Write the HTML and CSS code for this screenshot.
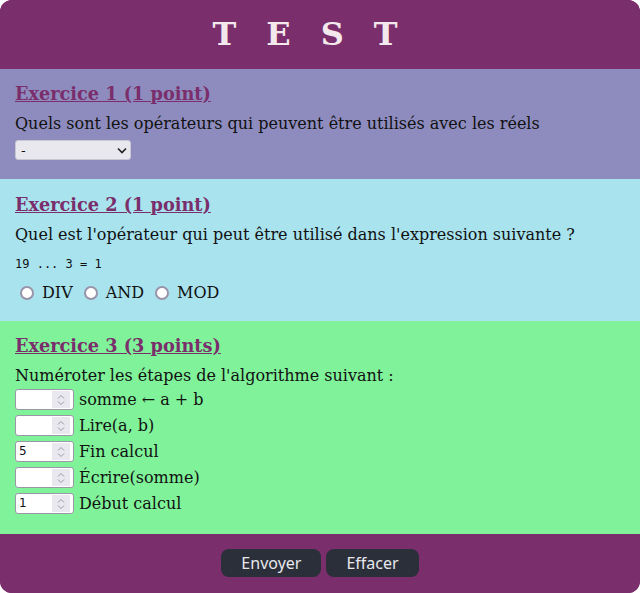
FILE: index.html
```html
<!DOCTYPE html>
<html lang="fr">
<head>
<meta charset="utf-8">
<title>Test</title>
<link rel="stylesheet" href="styles.css">
</head>
<body>
<form class="card">
  <header class="top">
    <h1 class="title">TEST</h1>
  </header>

  <section class="ex ex1">
    <h3 class="ex-title">Exercice 1 (1 point)</h3>
    <p class="q">Quels sont les opérateurs qui peuvent être utilisés avec les réels</p>
    <div class="select">
      <span class="select-val">-</span>
      <svg class="chev" width="10" height="7" viewBox="0 0 10 7"><path d="M1 1.5 L5 5.5 L9 1.5" fill="none" stroke="#222" stroke-width="1.6"/></svg>
    </div>
  </section>

  <section class="ex ex2">
    <h3 class="ex-title">Exercice 2 (1 point)</h3>
    <p class="q">Quel est l'opérateur qui peut être utilisé dans l'expression suivante ?</p>
    <code class="expr">19 ... 3 = 1</code>
    <div class="radios">
      <label class="opt"><span class="radio"></span>DIV</label>
      <label class="opt"><span class="radio"></span>AND</label>
      <label class="opt"><span class="radio"></span>MOD</label>
    </div>
  </section>

  <section class="ex ex3">
    <h3 class="ex-title">Exercice 3 (3 points)</h3>
    <p class="q q3">Numéroter les étapes de l'algorithme suivant :</p>
    <div class="steps">
      <div class="step"><span class="num"><span class="num-val"></span><span class="spin"><svg width="8" height="12" viewBox="0 0 8 12"><path d="M1 4.5 L4 1.5 L7 4.5 M1 7.5 L4 10.5 L7 7.5" fill="none" stroke="#9a9aa4" stroke-width="1"/></svg></span></span>somme ← a + b</div>
      <div class="step"><span class="num"><span class="num-val"></span><span class="spin"><svg width="8" height="12" viewBox="0 0 8 12"><path d="M1 4.5 L4 1.5 L7 4.5 M1 7.5 L4 10.5 L7 7.5" fill="none" stroke="#9a9aa4" stroke-width="1"/></svg></span></span>Lire(a, b)</div>
      <div class="step"><span class="num"><span class="num-val">5</span><span class="spin"><svg width="8" height="12" viewBox="0 0 8 12"><path d="M1 4.5 L4 1.5 L7 4.5 M1 7.5 L4 10.5 L7 7.5" fill="none" stroke="#9a9aa4" stroke-width="1"/></svg></span></span>Fin calcul</div>
      <div class="step"><span class="num"><span class="num-val"></span><span class="spin"><svg width="8" height="12" viewBox="0 0 8 12"><path d="M1 4.5 L4 1.5 L7 4.5 M1 7.5 L4 10.5 L7 7.5" fill="none" stroke="#9a9aa4" stroke-width="1"/></svg></span></span>Écrire(somme)</div>
      <div class="step"><span class="num"><span class="num-val">1</span><span class="spin"><svg width="8" height="12" viewBox="0 0 8 12"><path d="M1 4.5 L4 1.5 L7 4.5 M1 7.5 L4 10.5 L7 7.5" fill="none" stroke="#9a9aa4" stroke-width="1"/></svg></span></span>Début calcul</div>
    </div>
  </section>

  <footer class="bottom">
    <button type="button" class="btn">Envoyer</button>
    <button type="button" class="btn">Effacer</button>
  </footer>
</form>
</body>
</html>
```
FILE: styles.css
```css
html, body {
  margin: 0;
  padding: 0;
  background: #ffffff;
}
body {
  font-family: "DejaVu Serif", serif;
  font-size: 16px;
  color: #111;
}
.card {
  width: 640px;
  height: 593px;
  border-radius: 12px;
  overflow: hidden;
  display: flex;
  flex-direction: column;
  background: #7a2e6b;
}
.top {
  background: #7a2e6b;
  padding: 16px 0;
  height: 37px;
}
.title {
  margin: 0;
  text-align: center;
  font-size: 32px;
  line-height: 37px;
  font-weight: bold;
  letter-spacing: 30px;
  color: #f3e8ec;
}
.ex {
  padding: 14px 15px 0;
}
.ex1 { background: #8e8cbe; height: 96px; }
.ex2 { background: #a8e3ee; height: 127px; padding-top: 15px; }
.ex3 { background: #80f39a; height: 199px; padding-top: 14px; }
.ex-title {
  margin: 0;
  font-size: 17.7px;
  line-height: 22px;
  font-weight: bold;
  color: #7a2e6b;
  text-decoration: underline;
}
.q {
  margin: 9px 0 0;
  line-height: 19px;
}
.select {
  margin-top: 7px;
  width: 109px;
  height: 18px;
  border: 1px solid #c9c7d2;
  border-radius: 3px;
  background: #e9e8ee;
  display: flex;
  align-items: center;
  justify-content: space-between;
  padding: 0 0 0 5px;
  box-sizing: content-box;
  font-family: "DejaVu Sans", sans-serif;
  font-size: 13px;
}
.select .chev { margin-right: 3px; }
.select-val { color: #111; }
.expr {
  display: block;
  margin-top: 13px;
  font-family: "DejaVu Sans Mono", monospace;
  font-size: 12px;
  line-height: 14px;
}
.radios {
  display: flex;
  margin-top: 12px;
  line-height: 19px;
}
.opt {
  display: flex;
  align-items: center;
  margin-right: 6px;
}
.radio {
  width: 10px;
  height: 10px;
  border: 2px solid #9a94a8;
  border-radius: 50%;
  background: #fff;
  margin: 0 8px 0 5px;
}
.q3 { margin-top: 9px; }
.steps {
  display: flex;
  flex-direction: column;
  gap: 5px;
  margin-top: 4px;
}
.step {
  display: flex;
  align-items: center;
  height: 21px;
  line-height: 19px;
}
.num {
  display: flex;
  align-items: center;
  width: 57px;
  height: 19px;
  border: 1px solid #9a98a6;
  border-radius: 3px;
  background: #fff;
  margin-right: 5px;
  box-sizing: content-box;
}
.num-val {
  flex: 1;
  padding-left: 3px;
  font-family: "DejaVu Sans", sans-serif;
  font-size: 12px;
  color: #111;
}
.spin {
  width: 18px;
  height: 17px;
  background: #e9e8ee;
  margin-right: 3px;
  display: flex;
  align-items: center;
  justify-content: center;
}
.bottom {
  flex: 1;
  display: flex;
  justify-content: center;
  align-items: flex-start;
  gap: 5px;
  padding-top: 15px;
  background: #7a2e6b;
}
.btn {
  height: 28px;
  padding: 0 20px;
  border: none;
  border-radius: 8px;
  background: #2b2f3a;
  color: #e8e8ec;
  font-family: "Noto Sans", "DejaVu Sans", sans-serif;
  font-size: 16px;
  line-height: 28px;
}
```
